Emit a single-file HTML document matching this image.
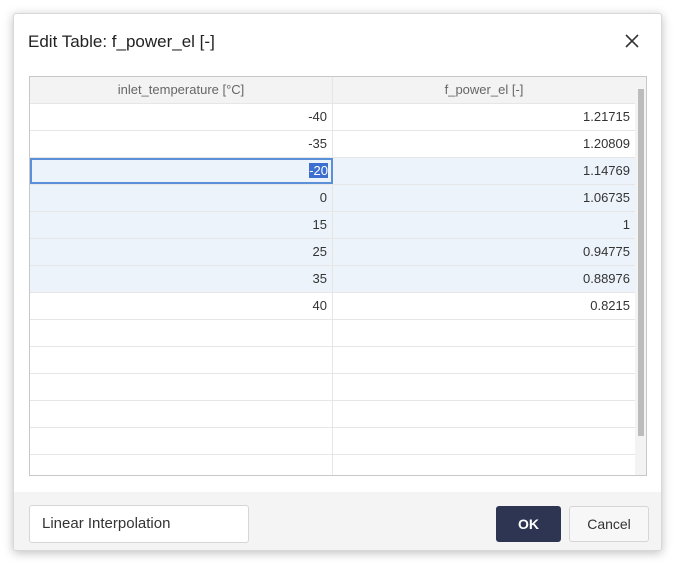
<!DOCTYPE html>
<html><head><style>
*{box-sizing:border-box;margin:0;padding:0}
body{width:676px;height:565px;background:#fff;font-family:"Liberation Sans",sans-serif;position:relative;overflow:hidden}
.dlg{position:absolute;left:13px;top:13px;width:649px;height:538px;background:#fff;border:1px solid #d8d8d8;border-radius:3px;box-shadow:0 2px 10px rgba(0,0,0,.25);overflow:hidden}
.title{position:absolute;left:14px;top:18px;font-size:17px;color:#222}
.x{position:absolute;left:611px;top:20px}
.tbl{position:absolute;left:15px;top:62px;width:618px;height:400px;border:1px solid #c8c8c8;overflow:hidden}
.row{position:absolute;left:0;width:605px;height:27px;border-bottom:1px solid #e6e6e6;font-size:13px;color:#333}
.row div{position:absolute;top:0;height:26px;line-height:26px;text-align:right;padding-right:5px}
.c1{left:0;width:303px;border-right:1px solid #e6e6e6}
.c2{left:303px;width:302px}
.hdr{background:#f3f3f3;color:#666}
.hdr div{text-align:center;padding:0}
.hl{background:#edf3fb}
.sb{position:absolute;left:605px;top:0;width:12px;height:398px;background:#f3f3f3}
.th{position:absolute;left:3px;top:12px;width:6px;height:347px;background:#bcbcbc}
.foot{position:absolute;left:0;top:478px;width:649px;height:60px;background:#f4f4f4}
.li{position:absolute;left:15px;top:13px;width:220px;height:38px;background:#fff;border:1px solid #d6d6d6;border-radius:3px;font-size:15px;line-height:36px;padding-left:12px;color:#333}
.ok{position:absolute;left:482px;top:14px;width:65px;height:36px;background:#2e3553;border-radius:3px;color:#fff;font-weight:bold;font-size:14px;text-align:center;line-height:36px}
.cn{position:absolute;left:555px;top:14px;width:80px;height:36px;background:#f7f7f7;border:1px solid #d6d6d6;border-radius:3px;color:#333;font-size:14px;text-align:center;line-height:34px}
</style></head><body>
<div class="dlg">
<div class="title">Edit Table: f_power_el [-]</div>
<svg class="x" width="14" height="14" viewBox="0 0 14 14"><path d="M1 1L13 13M13 1L1 13" stroke="#333" stroke-width="1.6"/></svg>
<div class="tbl">
<div class="row hdr" style="top:0"><div class="c1">inlet_temperature [°C]</div><div class="c2">f_power_el [-]</div></div>
<div class="row" style="top:27px"><div class="c1">-40</div><div class="c2">1.21715</div></div>
<div class="row" style="top:54px"><div class="c1">-35</div><div class="c2">1.20809</div></div>
<div class="row hl" style="top:81px"><div class="c1" style="border:2px solid #5b8fd8;line-height:22px;padding-right:3px"><span style="background:#3d6fd0;color:#fff">-20</span></div><div class="c2">1.14769</div></div>
<div class="row hl" style="top:108px"><div class="c1">0</div><div class="c2">1.06735</div></div>
<div class="row hl" style="top:135px"><div class="c1">15</div><div class="c2">1</div></div>
<div class="row hl" style="top:162px"><div class="c1">25</div><div class="c2">0.94775</div></div>
<div class="row hl" style="top:189px"><div class="c1">35</div><div class="c2">0.88976</div></div>
<div class="row" style="top:216px"><div class="c1">40</div><div class="c2">0.8215</div></div>
<div class="row" style="top:243px"><div class="c1"></div><div class="c2"></div></div>
<div class="row" style="top:270px"><div class="c1"></div><div class="c2"></div></div>
<div class="row" style="top:297px"><div class="c1"></div><div class="c2"></div></div>
<div class="row" style="top:324px"><div class="c1"></div><div class="c2"></div></div>
<div class="row" style="top:351px"><div class="c1"></div><div class="c2"></div></div>
<div class="row" style="top:378px"><div class="c1"></div><div class="c2"></div></div>
<div class="sb"><div class="th"></div></div>
</div>
<div class="foot">
<div class="li">Linear Interpolation</div>
<div class="ok">OK</div>
<div class="cn">Cancel</div>
</div>
</div>
</body></html>
